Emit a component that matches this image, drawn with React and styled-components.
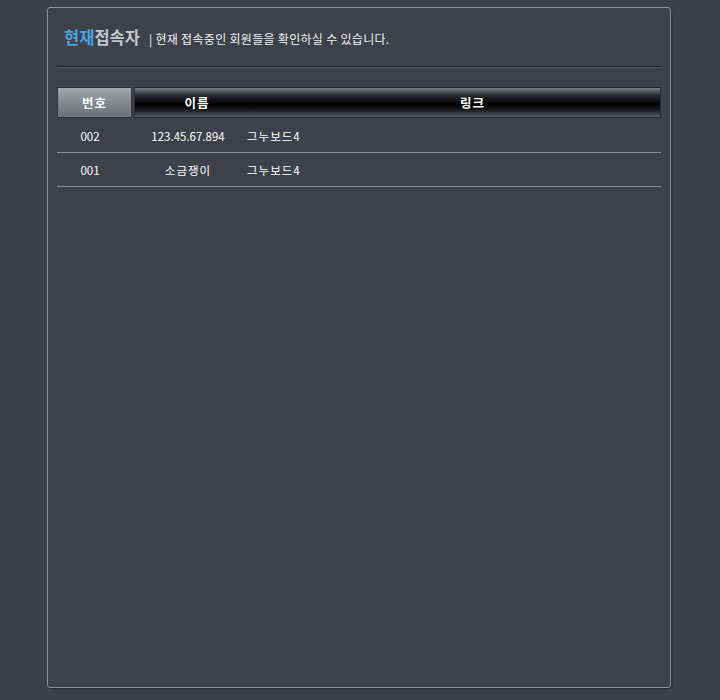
import React from 'react';
import styled, { createGlobalStyle } from 'styled-components';

const GlobalStyle = createGlobalStyle`
	body {
		margin: 0;
		background: #3d4049;
		font-family: "Noto Sans CJK KR", "DejaVu Sans", sans-serif;
		color: #fff;
	}
`;

const Page = styled.div`
	padding: 7px 0 0 47px;
	height: 700px;
	box-sizing: border-box;
`;

const Panel = styled.div`
	width: 624px;
	height: 681px;
	box-sizing: border-box;
	border: 1px solid #8e9098;
	border-radius: 3px;
	background: #3e414a;
	box-shadow: 1px 1px 2px rgba(0, 0, 0, 0.35);
	padding: 0 9px;
`;

const TitleBar = styled.div`
	display: flex;
	align-items: baseline;
	height: 59px;
	box-sizing: border-box;
	padding: 17px 0 0 7px;
	border-bottom: 1px solid #1c1e24;
	box-shadow: 0 1px 0 #52555d;
`;

const Title = styled.h1`
	margin: 0;
	font-size: 16.5px;
	font-weight: bold;
	color: #c4c6ca;
`;

const Accent = styled.span`
	color: #4aa2de;
`;

const Desc = styled.span`
	margin-left: 9px;
	font-size: 12px;
	color: #f2f2f2;
	letter-spacing: 0.3px;
`;

const Table = styled.div`
	margin-top: 20px;
`;

const HeadRow = styled.div`
	display: flex;
	gap: 2px;
	height: 31px;
`;

const NumHead = styled.div`
	width: 75px;
	box-sizing: border-box;
	border: 1px solid #30333a;
	background: linear-gradient(#a3a8ae, #868b92 45%, #6d7279);
	display: flex;
	align-items: center;
	justify-content: center;
	font-size: 12.5px;
	font-weight: bold;
	letter-spacing: 1px;
	color: #fff;
`;

const DarkHead = styled.div`
	flex: 1;
	display: flex;
	box-sizing: border-box;
	border: 1px solid #2a2c33;
	background: linear-gradient(#7a7b84, #2a2b31 25%, #000 55%, #1a1a20 76%, #5a5b66);
`;

const HeadLabel = styled.div`
	width: ${p => p.width || 'auto'};
	flex: ${p => (p.width ? 'none' : 1)};
	padding-left: ${p => p.pad || 0}px;
	display: flex;
	align-items: center;
	justify-content: center;
	font-size: 12.5px;
	font-weight: bold;
	letter-spacing: 1px;
	color: #fff;
`;

const Body = styled.div`
	padding-top: 1px;
`;

const Row = styled.div`
	display: flex;
	align-items: center;
	height: 34px;
	box-sizing: border-box;
	border-bottom: 1px solid #8a8c92;
	font-size: 11.5px;
	color: #fff;
	padding-top: 1px;
`;

const Cell = styled.div`
	width: ${p => p.width}px;
	padding-left: ${p => p.pad || 0}px;
	text-align: ${p => p.align || 'center'};
	letter-spacing: ${p => p.spacing || 0}px;
	flex: ${p => (p.width ? 'none' : 1)};
`;

const users = [
	{ no: '002', name: '123.45.67.894', link: '그누보드4' },
	{ no: '001', name: '소금쟁이', link: '그누보드4' },
];

export default function App() {
	return (
		<Page>
			<GlobalStyle />
			<Panel>
				<TitleBar>
					<Title>
						<Accent>현재</Accent>접속자
					</Title>
					<Desc>| 현재 접속중인 회원들을 확인하실 수 있습니다.</Desc>
				</TitleBar>
				<Table>
					<HeadRow>
						<NumHead>번호</NumHead>
						<DarkHead>
							<HeadLabel width="124px">이름</HeadLabel>
							<HeadLabel pad={26}>링크</HeadLabel>
						</DarkHead>
					</HeadRow>
					<Body>
						{users.map(u => (
							<Row key={u.no}>
								<Cell width={66}>{u.no}</Cell>
								<Cell width={118} pad={6} spacing={/\d/.test(u.name) ? 0 : 1}>
									{u.name}
								</Cell>
								<Cell align="left" spacing={1}>
									{u.link}
								</Cell>
							</Row>
						))}
					</Body>
				</Table>
			</Panel>
		</Page>
	);
}
